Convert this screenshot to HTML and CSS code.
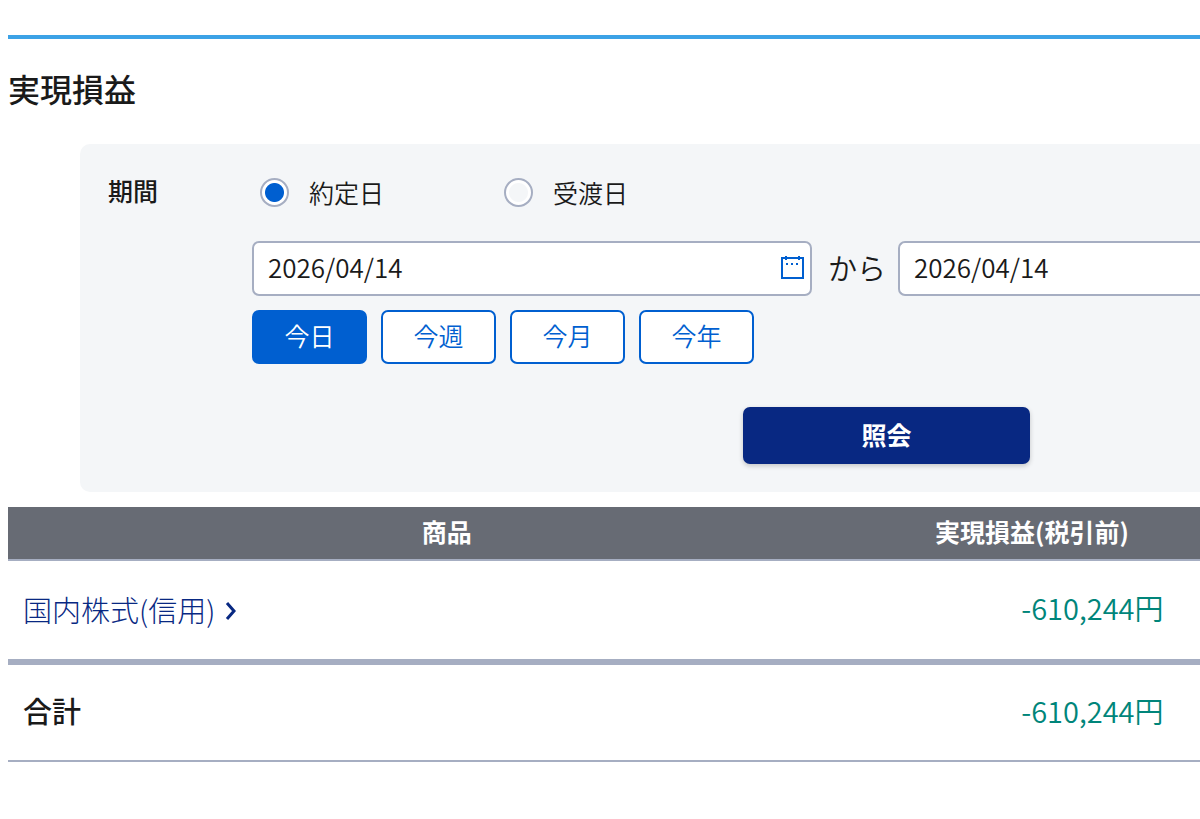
FILE: index.html
```html
<!DOCTYPE html>
<html lang="ja">
<head>
<meta charset="utf-8">
<title>実現損益</title>
<link rel="stylesheet" href="styles.css">
</head>
<body>
<main class="page">
  <h1 class="title">実現損益</h1>
  <form class="panel">
    <div class="period">
      <h2 class="period-label">期間</h2>
      <div class="period-fields">
        <div class="radios">
          <label class="radio"><input type="radio" name="basis" checked><span>約定日</span></label>
          <label class="radio"><input type="radio" name="basis"><span>受渡日</span></label>
        </div>
        <div class="dates">
          <div class="date">
            <input type="text" value="2026/04/14" aria-label="開始日">
            <button class="calendar" type="button" aria-label="カレンダー">
              <svg width="24" height="24" viewBox="0 0 24 24" fill="none" stroke="currentColor" stroke-width="2">
                <path d="M2 3H23V23H2Z M6 1V5 M19 1V5"/>
                <path d="M6 9H8 M11 9H13 M16 9H18"/>
              </svg>
            </button>
          </div>
          <span class="from">から</span>
          <div class="date date-end">
            <input type="text" value="2026/04/14" aria-label="終了日">
          </div>
        </div>
        <div class="ranges">
          <button class="range selected" type="button">今日</button>
          <button class="range" type="button">今週</button>
          <button class="range" type="button">今月</button>
          <button class="range" type="button">今年</button>
        </div>
      </div>
    </div>
    <div class="actions">
      <button class="submit" type="submit">照会</button>
    </div>
  </form>
  <table class="results">
    <colgroup><col class="col-product"><col class="col-amount"><col></colgroup>
    <thead>
      <tr><th scope="col">商品</th><th scope="col">実現損益(税引前)</th><td></td></tr>
    </thead>
    <tbody>
      <tr>
        <td><a class="product" href="#">国内株式(信用)<svg width="14" height="24" viewBox="0 0 14 24" fill="none" stroke="currentColor" stroke-width="3"><path d="M3 6L10 14L3 22"/></svg></a></td>
        <td class="amount">-610,244円</td><td></td>
      </tr>
    </tbody>
    <tfoot>
      <tr><th scope="row">合計</th><td class="amount">-610,244円</td><td></td></tr>
    </tfoot>
  </table>
</main>
</body>
</html>
```
FILE: styles.css
```css
* {
  box-sizing: border-box;
}

body {
  margin: 0;
  background: #fff;
  color: #1a1a1a;
  font-family: "Noto Sans CJK JP", sans-serif;
  font-size: 25px;
  font-weight: 350;
  line-height: 36px;
}

button,
input {
  font: inherit;
  color: inherit;
}

.page {
  margin: 35px 0 0 8px;
  border-top: 4px solid #3ca2e6;
}

.title {
  margin: 0;
  padding: 25px 0 32px;
  font-size: 32px;
  font-weight: 500;
  line-height: 48px;
}

.panel {
  margin-left: 72px;
  padding: 28px 0 28px 28px;
  border-radius: 10px 0 0 10px;
  background: #f4f6f8;
}

.period {
  display: flex;
}

.period-label {
  flex: 0 0 144px;
  margin: 0;
  font-size: 25px;
  font-weight: 500;
  line-height: 36px;
}

.period-fields {
  flex: 1;
}

.radios {
  display: flex;
  padding: 2px 0 0 8px;
}

.radio {
  display: flex;
  align-items: center;
  gap: 20px;
  width: 244px;
}

.radio input {
  appearance: none;
  width: 29px;
  height: 29px;
  margin: 0;
  border: 2px solid #a6aec2;
  border-radius: 50%;
  background: radial-gradient(circle, #f4f6f8 9px, #fff 10px);
}

.radio input:checked {
  background: radial-gradient(circle, #005fd0 9px, #fff 10px);
}

.dates {
  display: grid;
  grid-template-columns: minmax(0, 560fr) auto minmax(0, 302fr);
  align-items: center;
  margin-top: 31px;
}

.date {
  display: flex;
  align-items: center;
  height: 55px;
  padding: 0 6px 4px 14px;
  border: 2px solid #a6aec2;
  border-radius: 7px;
  background: #fff;
}

.date-end {
  border-right: 0;
  border-radius: 7px 0 0 7px;
}

.date input {
  flex: 1;
  min-width: 0;
  padding: 0;
  border: 0;
  outline: 0;
  background: none;
  font-size: 26px;
}

.calendar {
  display: flex;
  padding: 0;
  border: 0;
  background: none;
  color: #005fd0;
}

.from {
  padding: 0 12px 4px 16px;
  font-size: 29px;
}

.ranges {
  display: flex;
  gap: 14px;
  margin-top: 14px;
}

.range {
  width: 115px;
  height: 54px;
  padding: 0 0 4px;
  border: 2px solid #005fd0;
  border-radius: 7px;
  background: #fff;
  color: #005fd0;
}

.range.selected {
  background: #005fd0;
  color: #fff;
}

.actions {
  display: flex;
  justify-content: flex-end;
  margin-top: 43px;
  padding-right: 170px;
}

.submit {
  width: 287px;
  height: 57px;
  padding: 0 0 4px;
  border: 0;
  border-radius: 7px;
  background: #082882;
  box-shadow: 0 2px 5px rgba(0, 0, 0, 0.2);
  color: #fff;
  font-weight: 700;
}

.results {
  width: 100%;
  margin-top: 15px;
  border-collapse: collapse;
  table-layout: fixed;
}

.col-product {
  width: 73.6%;
}

.col-amount {
  width: 24.6%;
}

.results th,
.results td {
  padding: 0 15px 6px;
}

.results thead tr {
  height: 53px;
  border-bottom: 2px solid #a6aec2;
  background: #676b74;
  color: #fff;
}

.results thead th {
  padding: 0 0 4px;
  font-weight: 700;
}

.results tbody tr {
  height: 102px;
}

.results tbody td:first-child {
  padding-bottom: 2px;
}

.results tfoot tr {
  height: 99px;
  border-top: 6px solid #a6aec2;
  border-bottom: 2px solid #a6aec2;
}

.results tbody,
.results tfoot {
  font-size: 29px;
}

.results tfoot th {
  font-weight: 500;
  text-align: left;
}

.product {
  display: inline-flex;
  align-items: center;
  gap: 9px;
  color: #082882;
  font-weight: 300;
  text-decoration: none;
}

.results .amount {
  color: #00857a;
  text-align: right;
}
```
